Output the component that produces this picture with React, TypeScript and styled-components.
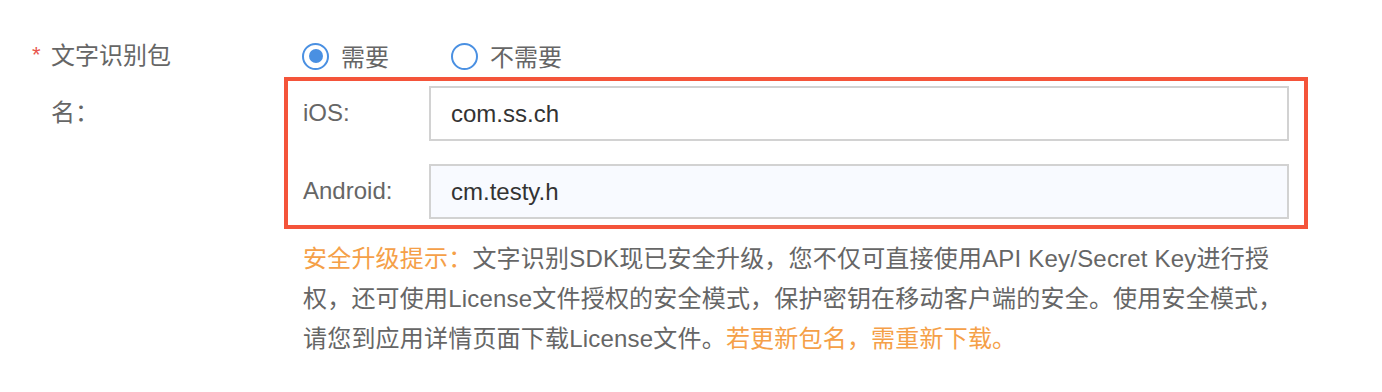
import { createGlobalStyle, styled } from 'styled-components';

const GlobalStyle = createGlobalStyle`
  html, body {
    margin: 0;
    padding: 0;
    background: #fff;
  }
  body {
    font-family: "Liberation Sans", "Noto Sans CJK SC", sans-serif;
  }
`;

const App = () => {
  return (
    <>
      <GlobalStyle />
      <Page>
        <FormItem>
          <Label $required>文字识别包名：</Label>
          <Content>
            <RadioGroup>
              <RadioOption>
                <RadioCircle $checked />
                需要
              </RadioOption>
              <RadioOption>
                <RadioCircle />
                不需要
              </RadioOption>
            </RadioGroup>
            <HighlightBox>
              <FieldRow>
                <FieldLabel>iOS:</FieldLabel>
                <Input readOnly value="com.ss.ch" />
              </FieldRow>
              <FieldRow>
                <FieldLabel>Android:</FieldLabel>
                <Input readOnly value="cm.testy.h" $tinted />
              </FieldRow>
            </HighlightBox>
            <Tip>
              <Accent>安全升级提示：</Accent>
              文字识别SDK现已安全升级，您不仅可直接使用API Key/Secret Key进行授
              <br />
              权，还可使用License文件授权的安全模式，保护密钥在移动客户端的安全。使用安全模式，
              <br />
              请您到应用详情页面下载License文件。
              <Accent>若更新包名，需重新下载。</Accent>
            </Tip>
          </Content>
        </FormItem>
      </Page>
    </>
  );
};

export default App;

const Page = styled.main`
  padding: 28px 0 0 30px;
`;

const FormItem = styled.div`
  display: flex;
  align-items: flex-start;
`;

const Label = styled.label<{ $required?: boolean }>`
  position: relative;
  flex: 0 0 254px;
  box-sizing: border-box;
  padding: 0 103px 0 21px;
  font-size: 24px;
  line-height: 56.5px;
  color: #666;

  &::before {
    content: ${(p) => (p.$required ? '"*"' : 'none')};
    position: absolute;
    left: 2px;
    top: 7px;
    font-size: 22px;
    line-height: 40px;
    color: #e8554e;
  }
`;

const Content = styled.div`
  flex: 0 0 auto;
  display: flex;
  flex-direction: column;
`;

const RadioGroup = styled.div`
  display: flex;
  align-items: center;
  box-sizing: border-box;
  height: 49px;
  padding: 8px 0 0 18px;
`;

const RadioOption = styled.span`
  display: flex;
  align-items: center;
  gap: 12px;
  margin-right: 62px;
  font-size: 24px;
  line-height: 30px;
  color: #666;
  padding-top: 3px;
`;

const RadioCircle = styled.span<{ $checked?: boolean }>`
  position: relative;
  top: -2px;
  box-sizing: border-box;
  width: 27px;
  height: 27px;
  border: 2px solid #4a90e2;
  border-radius: 50%;
  background: #fff;

  &::after {
    content: '';
    display: ${(p) => (p.$checked ? 'block' : 'none')};
    position: absolute;
    left: 4.5px;
    top: 4.5px;
    width: 14px;
    height: 14px;
    border-radius: 50%;
    background: #4a90e2;
  }
`;

const HighlightBox = styled.div`
  width: 1024px;
  box-sizing: border-box;
  border: 4px solid #f4543a;
  padding: 5px 15px 6px 15px;
  display: flex;
  flex-direction: column;
  gap: 23px;
`;

const FieldRow = styled.div`
  display: flex;
  align-items: center;
`;

const FieldLabel = styled.span`
  flex: 0 0 126px;
  font-size: 24px;
  color: #666;
  padding-bottom: 2px;
`;

const Input = styled.input<{ $tinted?: boolean }>`
  flex: 1;
  min-width: 0;
  height: 55px;
  box-sizing: border-box;
  border: 2px solid #d2d2d2;
  border-radius: 0;
  padding: 0 20px;
  font-family: inherit;
  font-size: 24px;
  color: #333;
  background: ${(p) => (p.$tinted ? '#f8faff' : '#fff')};
  outline: none;
`;

const Tip = styled.p`
  margin: 10px 0 0 0;
  padding-left: 19px;
  width: 1010px;
  font-size: 24px;
  line-height: 40px;
  letter-spacing: 0.2px;
  color: #666;
`;

const Accent = styled.span`
  color: #f5a048;
`;
